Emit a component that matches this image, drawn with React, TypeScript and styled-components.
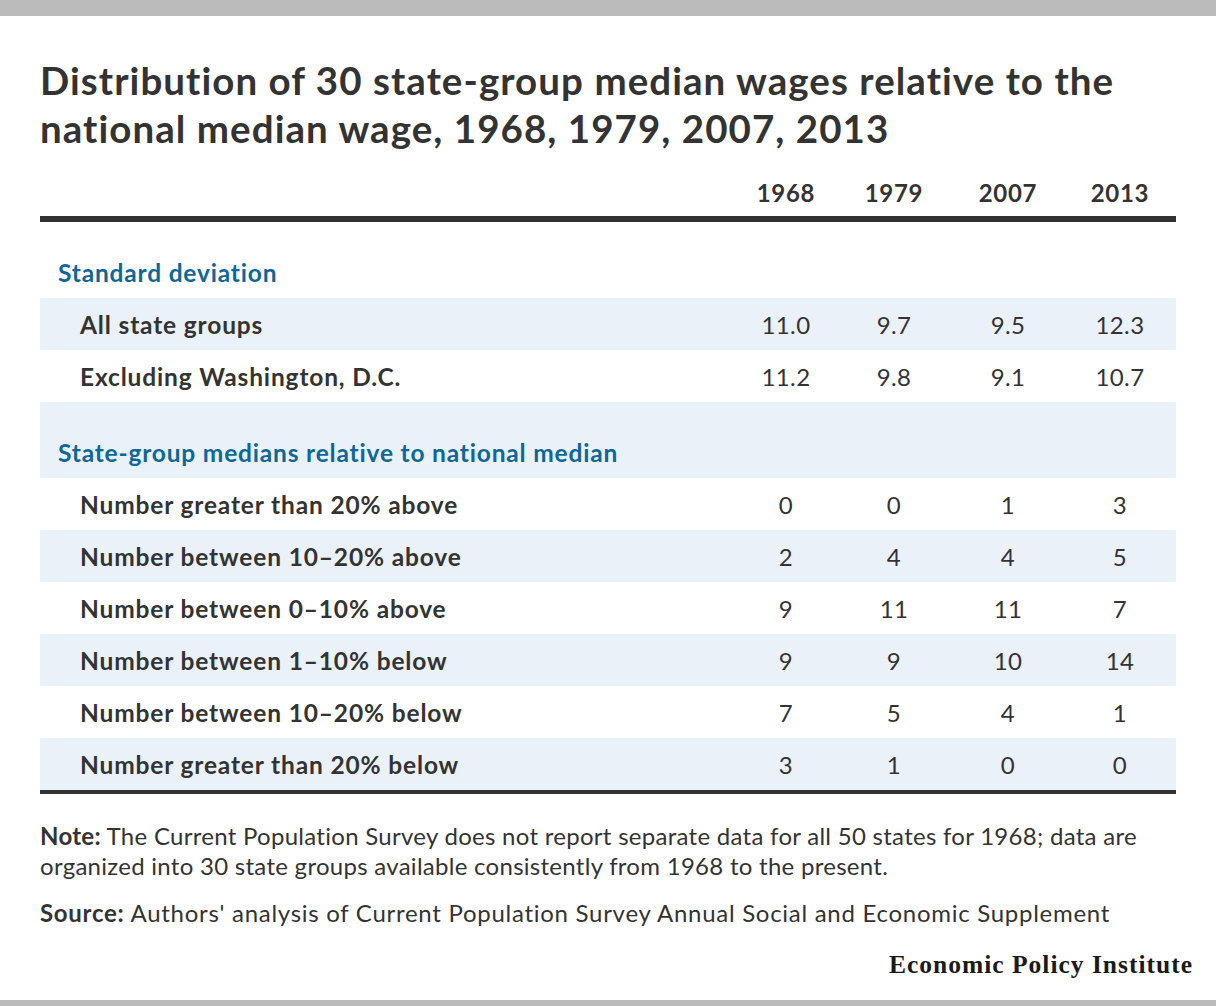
import React from "react";
import styled, { createGlobalStyle } from "styled-components";

const Global = createGlobalStyle`
  html, body { margin: 0; padding: 0; background: #fff; }
  body { font-family: Lato, "Open Sans", Arial, sans-serif; color: #333; }
`;

const Page = styled.div`
  width: 1216px;
  height: 1006px;
  display: flex;
  flex-direction: column;
  background: #fff;
`;

const Bar = styled.div<{ $h: number }>`
  height: ${(p) => p.$h}px;
  background: #bbbbbb;
  flex: none;
`;

const Content = styled.div`
  padding: 40px 40px 0 40px;
  display: flex;
  flex-direction: column;
`;

const Title = styled.h1`
  margin: 0;
  font-size: 38.5px;
  line-height: 48px;
  font-weight: 700;
  color: #333;
  letter-spacing: 1.05px;
`;

const Table = styled.div`
  margin-top: 28px;
  border-bottom: 4px solid #333;
`;

const cols = "1fr 100px 116px 112px 112px";

const HeadRow = styled.div`
  display: grid;
  grid-template-columns: ${cols};
  padding-bottom: 10px;
  border-bottom: 6px solid #333;
`;

const HeadCell = styled.div`
  font-size: 24px;
  line-height: 26px;
  font-weight: 700;
  letter-spacing: 0.7px;
  text-align: center;
`;

const Row = styled.div<{ $striped: boolean; $group?: boolean }>`
  display: grid;
  grid-template-columns: ${cols};
  align-items: center;
  height: ${(p) => (p.$group ? 76 : 52)}px;
  box-sizing: border-box;
  padding-top: ${(p) => (p.$group ? 24 : 0)}px;
  background: ${(p) => (p.$striped ? "#eaf1f9" : "#fff")};
`;

const GroupLabel = styled.div`
  grid-column: 1 / -1;
  padding-left: 18px;
  font-size: 24.5px;
  font-weight: 700;
  letter-spacing: 0.82px;
  color: #0f6799;
`;

const Label = styled.div`
  padding-left: 40px;
  font-size: 24.5px;
  font-weight: 700;
  letter-spacing: 0.85px;
  color: #333;
`;

const Value = styled.div`
  font-size: 24px;
  font-weight: 400;
  letter-spacing: 0.4px;
  text-align: center;
  color: #333;
`;

const Note = styled.p<{ $mt: number; $ls: number }>`
  margin: ${(p) => p.$mt}px 0 0 0;
  font-size: 24px;
  line-height: 30px;
  letter-spacing: ${(p) => p.$ls}px;
  color: #333;
  b { font-weight: 700; }
`;

const Footer = styled.div`
  flex: 1;
  display: flex;
  justify-content: flex-end;
  align-items: flex-start;
  padding: 22px 23px 0 0;
`;

const Logo = styled.div`
  font-family: "Liberation Serif", "DejaVu Serif", serif;
  font-weight: 700;
  font-size: 25.5px;
  color: #1a1a1a;
  letter-spacing: 1px;
`;

type Item =
  | { kind: "group"; label: string }
  | { kind: "row"; label: string; values: string[] };

const items: Item[] = [
  { kind: "group", label: "Standard deviation" },
  { kind: "row", label: "All state groups", values: ["11.0", "9.7", "9.5", "12.3"] },
  { kind: "row", label: "Excluding Washington, D.C.", values: ["11.2", "9.8", "9.1", "10.7"] },
  { kind: "group", label: "State-group medians relative to national median" },
  { kind: "row", label: "Number greater than 20% above", values: ["0", "0", "1", "3"] },
  { kind: "row", label: "Number between 10–20% above", values: ["2", "4", "4", "5"] },
  { kind: "row", label: "Number between 0–10% above", values: ["9", "11", "11", "7"] },
  { kind: "row", label: "Number between 1–10% below", values: ["9", "9", "10", "14"] },
  { kind: "row", label: "Number between 10–20% below", values: ["7", "5", "4", "1"] },
  { kind: "row", label: "Number greater than 20% below", values: ["3", "1", "0", "0"] },
];

const years = ["1968", "1979", "2007", "2013"];

export default function App() {
  return (
    <Page>
      <Global />
      <Bar $h={16} />
      <Content>
        <Title>
          Distribution of 30 state-group median wages relative to the
          <br />
          national median wage, 1968, 1979, 2007, 2013
        </Title>
        <Table>
          <HeadRow>
            <div />
            {years.map((y) => (
              <HeadCell key={y}>{y}</HeadCell>
            ))}
          </HeadRow>
          {items.map((it, i) =>
            it.kind === "group" ? (
              <Row key={i} $striped={i % 2 === 1} $group>
                <GroupLabel>{it.label}</GroupLabel>
              </Row>
            ) : (
              <Row key={i} $striped={i % 2 === 1}>
                <Label>{it.label}</Label>
                {it.values.map((v, j) => (
                  <Value key={j}>{v}</Value>
                ))}
              </Row>
            )
          )}
        </Table>
        <Note $mt={27} $ls={0.28}>
          <b>Note:</b> The Current Population Survey does not report separate data for all 50 states for 1968; data are
          <br />
          organized into 30 state groups available consistently from 1968 to the present.
        </Note>
        <Note $mt={17} $ls={0.72}>
          <b>Source:</b> Authors' analysis of Current Population Survey Annual Social and Economic Supplement
        </Note>
      </Content>
      <Footer>
        <Logo>Economic Policy Institute</Logo>
      </Footer>
      <Bar $h={6} />
    </Page>
  );
}
